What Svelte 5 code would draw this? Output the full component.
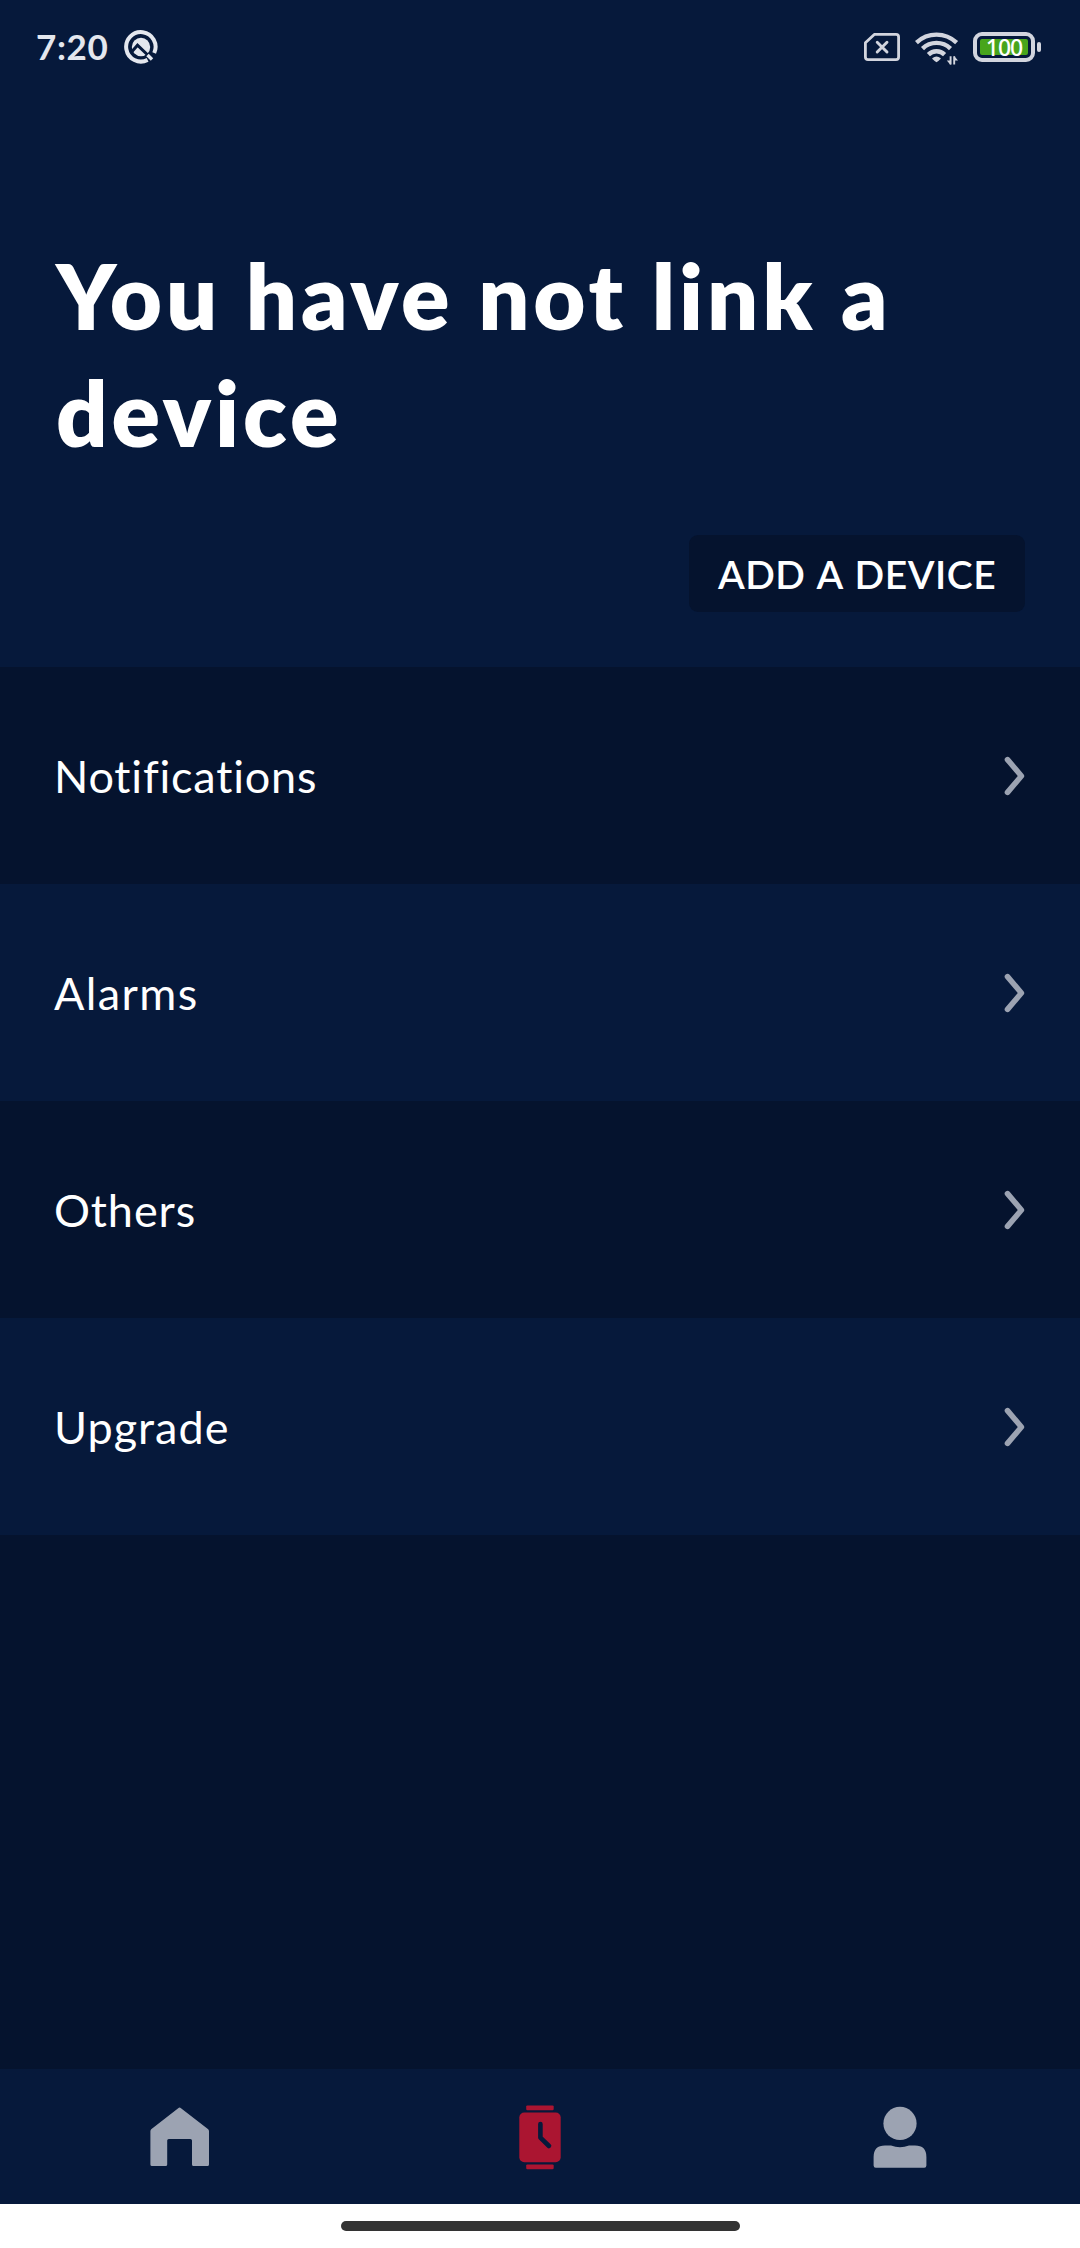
<script lang="ts">
  const rows = [
    { label: 'Notifications', spacing: 0.8 },
    { label: 'Alarms', spacing: 1.4 },
    { label: 'Others', spacing: 0.9 },
    { label: 'Upgrade', spacing: 1 },
  ];

  let activeTab = $state('device');
</script>

<div class="screen">
  <header class="status-bar">
    <div class="status-left">
      <span class="time">7:20</span>
      <svg class="focus-icon" width="36" height="36" viewBox="0 0 36 36" aria-hidden="true">
        <path d="M24.6 30.9A14.7 14.7 0 1 1 31.2 24" fill="none" stroke="#e4e7ee" stroke-width="4" />
        <circle cx="18" cy="18" r="9.2" fill="#e4e7ee" />
        <path d="M9 22.5L14.5 16.2L31.5 32.5" fill="none" stroke="#06193b" stroke-width="3" />
        <path d="M24.5 26L29 30.5" stroke="#e4e7ee" stroke-width="3.4" />
      </svg>
    </div>
    <div class="status-right">
      <svg width="36" height="28" viewBox="0 0 36 28" aria-hidden="true">
        <path d="M10.3 1.4H32Q34.6 1.4 34.6 4V24Q34.6 26.6 32 26.6H4Q1.4 26.6 1.4 24V9.8Z" fill="none" stroke="#d2d5de" stroke-width="2.8" stroke-linejoin="round" />
        <path d="M13.2 9.2L23 19M23 9.2L13.2 19" stroke="#d2d5de" stroke-width="2.9" stroke-linecap="round" />
      </svg>
      <svg class="wifi" width="44" height="34" viewBox="0 0 44 34" aria-hidden="true">
        <g fill="none" stroke="#d2d5de" stroke-width="4.4">
          <path d="M1.4 10.6Q10 2.6 21.5 2.6T41.6 10.6" />
          <path d="M7.5 16.6Q13.4 10.9 21.5 10.9T35.5 16.6" />
          <path d="M13.4 22.6Q16.8 19.2 21.5 19.2T29.6 22.6" />
        </g>
        <path d="M17.2 26.2Q21.5 22.8 25.8 26.2Q25.8 27.4 21.5 30.3Q17.2 27.4 17.2 26.2Z" fill="#d2d5de" />
        <path d="M35.6 24.2V32.6M39.2 24.2V32.6" stroke="#d2d5de" stroke-width="1.9" />
        <path d="M35.6 33L31.8 28.4H35.6ZM39.2 24L43 28.6H39.2Z" fill="#d2d5de" />
      </svg>
      <div class="battery">
        <div class="battery-body"><div class="battery-fill"><span>100</span></div></div>
        <i></i>
      </div>
    </div>
  </header>

  <section class="hero">
    <h1>You have not link a<br /><span>device</span></h1>
    <button class="add-device"><span>ADD A DEVICE</span></button>
  </section>

  <main>
    {#each rows as row}
      <div class="row">
        <span style="letter-spacing: {row.spacing}px">{row.label}</span>
        <svg width="22" height="42" viewBox="0 0 22 42" aria-hidden="true">
          <path d="M4.5 4.6L18.4 21L4.5 37.4" fill="none" stroke="#9ca3b2" stroke-width="5.6" stroke-linecap="round" stroke-linejoin="round" />
        </svg>
      </div>
    {/each}
  </main>

  <nav>
    <button aria-label="Home" class:active={activeTab === 'home'} onclick={() => (activeTab = 'home')}>
      <svg width="60" height="66" viewBox="0 0 60 66">
        <path d="M28.2 4.2Q29.6 3 31 4.2L58.2 25.2Q59 26 59 27.2V60.4Q59 62 57.4 62H43.6Q42 62 42 60.4V36.6Q42 35 40.4 35H18.8Q17.2 35 17.2 36.6V60.4Q17.2 62 15.6 62H2Q.4 62 .4 60.4V27.2Q.4 26 1.2 25.2Z" />
      </svg>
    </button>
    <button aria-label="Device" class:active={activeTab === 'device'} onclick={() => (activeTab = 'device')}>
      <svg width="42" height="66" viewBox="0 0 42 66">
        <rect x="7.2" y="1.4" width="27.5" height="4.8" rx="1.2" />
        <rect x="7.2" y="60.4" width="27.5" height="4.8" rx="1.2" />
        <rect x=".3" y="8.6" width="41.4" height="49.6" rx="5" />
        <path class="hand" d="M21.4 20V33.6L30 42" />
      </svg>
    </button>
    <button aria-label="Profile" class:active={activeTab === 'profile'} onclick={() => (activeTab = 'profile')}>
      <svg width="54" height="66" viewBox="0 0 54 66">
        <circle cx="27" cy="19.4" r="16.6" />
        <path d="M.6 53Q.6 41.6 12 41.6H18Q27 44.9 36 41.6H42Q53.4 41.6 53.4 53V61.6Q53.4 63.8 51.2 63.8H2.8Q.6 63.8 .6 61.6Z" />
      </svg>
    </button>
  </nav>

  <footer><div class="home-indicator"></div></footer>
</div>

<style>
  :global(body) {
    margin: 0;
    background: #05132e;
  }

  .screen {
    display: flex;
    flex-direction: column;
    width: 1080px;
    height: 2248px;
    overflow: hidden;
    background: #05132e;
    color: #fff;
    font-family: Lato, 'Open Sans', sans-serif;
  }

  button {
    border: 0;
    padding: 0;
    color: inherit;
    font-family: inherit;
  }

  svg {
    display: block;
    flex: none;
  }

  .status-bar {
    box-sizing: border-box;
    display: flex;
    justify-content: space-between;
    height: 94px;
    padding: 0 39px 0 36px;
    background: #06193b;
  }

  .status-left,
  .status-right {
    display: flex;
    align-items: center;
    height: 94px;
  }

  .time {
    width: 87px;
    margin-bottom: 2px;
    color: #e4e7ee;
    font-size: 35px;
    font-weight: 700;
    letter-spacing: 0.6px;
    line-height: 42px;
    white-space: nowrap;
  }

  .status-right svg {
    margin-right: 15px;
  }

  .status-right .wifi {
    margin: 3px 14px 0 0;
  }

  .battery {
    display: flex;
    align-items: center;
    gap: 2px;
  }

  .battery-body {
    box-sizing: border-box;
    width: 62px;
    height: 30px;
    padding: 3px;
    border: 4px solid #d2d5de;
    border-radius: 9px;
  }

  .battery-fill {
    display: flex;
    align-items: center;
    justify-content: center;
    height: 16px;
    border-radius: 2px;
    background: #48a51c;
    color: #fff;
    font-family: 'Noto Sans', sans-serif;
    font-size: 23px;
    font-weight: 500;
    letter-spacing: -1px;
    line-height: 16px;
  }

  .battery i {
    width: 4px;
    height: 10px;
    border-radius: 2px;
    background: #d2d5de;
  }

  .hero {
    box-sizing: border-box;
    display: flex;
    flex-direction: column;
    height: 573px;
    padding: 143px 55px 0 56px;
    background: #06193b;
  }

  h1 {
    margin: 0;
    font-size: 90px;
    font-weight: 800;
    line-height: 117px;
    letter-spacing: 3.9px;
    white-space: nowrap;
  }

  .add-device {
    align-self: flex-end;
    width: 336px;
    height: 77px;
    margin-top: 64px;
    border-radius: 9px;
    background: #05132e;
    font-size: 39px;
    font-weight: 600;
    letter-spacing: 0.5px;
    word-spacing: 2px;
    white-space: nowrap;
  }

  .row {
    box-sizing: border-box;
    display: flex;
    align-items: center;
    justify-content: space-between;
    height: 217px;
    padding: 0 55px 0 54px;
    font-size: 45px;
  }

  .row:nth-child(even) {
    background: #06193b;
  }

  nav {
    display: flex;
    height: 135px;
    margin-top: auto;
    background: #06193b;
  }

  nav button {
    display: flex;
    flex: 1;
    align-items: center;
    justify-content: center;
    background: none;
    fill: #9ca3b2;
  }

  nav button.active {
    fill: #ab1531;
  }

  .hand {
    fill: none;
    stroke: #06193b;
    stroke-width: 4.6;
    stroke-linecap: round;
    stroke-linejoin: round;
  }

  footer {
    display: flex;
    justify-content: center;
    height: 44px;
    background: #fff;
  }

  .home-indicator {
    width: 399px;
    height: 10px;
    margin-top: 17px;
    border-radius: 5px;
    background: #333;
  }
</style>
